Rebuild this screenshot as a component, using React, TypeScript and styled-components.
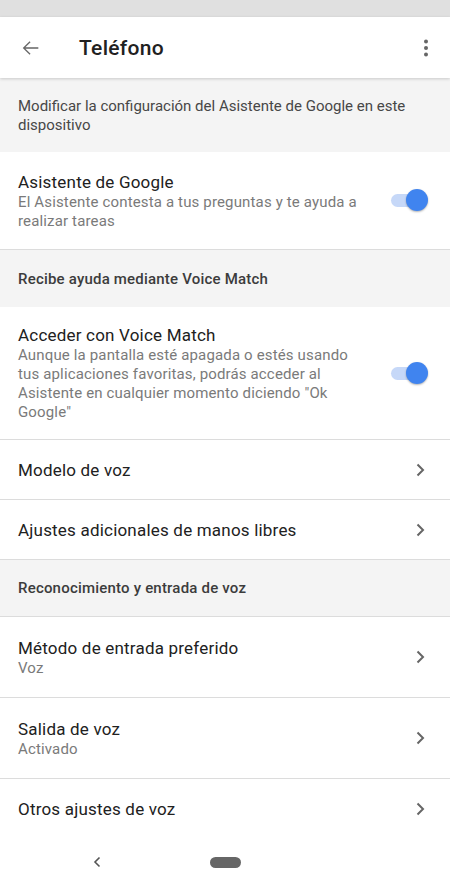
import React from "react";
import styled, { createGlobalStyle } from "styled-components";

const Global = createGlobalStyle`
  html, body { margin: 0; padding: 0; background: #ffffff; }
  body { font-family: Roboto, "Noto Sans", Arial, sans-serif; -webkit-font-smoothing: antialiased; }
  * { box-sizing: border-box; }
`;

const Screen = styled.div`
  width: 450px;
  height: 889px;
  display: flex;
  flex-direction: column;
  background: #ffffff;
  overflow: hidden;
`;

const StatusBar = styled.div`
  height: 17px;
  background: #e0e0e0;
  flex-shrink: 0;
`;

const AppBar = styled.div`
  height: 61px;
  display: flex;
  align-items: center;
  background: #ffffff;
  box-shadow: 0 1px 3px rgba(0, 0, 0, 0.18);
  position: relative;
  z-index: 1;
  flex-shrink: 0;
  padding: 0 11px 0 18px;
`;

const IconButton = styled.div`
  width: 26px;
  height: 26px;
  display: flex;
  align-items: center;
  justify-content: center;
  color: #666666;
`;

const Title = styled.h1`
  margin: 0 0 0 35px;
  flex: 1;
  font-size: 21px;
  font-weight: 500;
  color: #212121;
  letter-spacing: 0.3px;
`;

const Content = styled.div`
  flex: 1;
  display: flex;
  flex-direction: column;
`;

const Description = styled.div`
  background: #f4f4f4;
  padding: 9px 18px 8px;
  height: 74px;
  display: flex;
  align-items: center;
  font-size: 15px;
  line-height: 19px;
  color: #474747;
`;

const SectionHeader = styled.div<{ $borderBottom?: boolean }>`
  background: #f4f4f4;
  height: 57px;
  display: flex;
  align-items: center;
  padding: 0 18px;
  font-size: 15px;
  font-weight: 500;
  letter-spacing: 0.2px;
  color: #3c3c3c;
  border-bottom: ${(p) => (p.$borderBottom ? "1px solid #dcdcdc" : "none")};
`;

const Row = styled.div<{ $height: number; $divider?: boolean }>`
  height: ${(p) => p.$height}px;
  display: flex;
  align-items: center;
  padding: 0 25px 0 18px;
  border-bottom: ${(p) => (p.$divider ? "1px solid #dcdcdc" : "none")};
  flex-shrink: 0;
`;

const TextCol = styled.div`
  flex: 1;
  display: flex;
  flex-direction: column;
  padding-right: 24px;
`;

const RowTitle = styled.div`
  font-size: 17px;
  line-height: 22px;
  letter-spacing: 0.2px;
  color: #212121;
`;

const RowSub = styled.div`
  font-size: 15px;
  line-height: 19px;
  letter-spacing: 0.15px;
  color: #7a7a7a;
`;

const Track = styled.div`
  width: 34px;
  height: 13px;
  border-radius: 7px;
  background: #c6d8f8;
  position: relative;
  flex-shrink: 0;
`;

const Thumb = styled.div`
  position: absolute;
  right: -3px;
  top: -5px;
  width: 22px;
  height: 22px;
  border-radius: 50%;
  background: #4084ef;
  box-shadow: 0 1px 2px rgba(0, 0, 0, 0.3);
`;

const NavBar = styled.div`
  height: 50px;
  flex-shrink: 0;
  display: flex;
  align-items: center;
  position: relative;
  background: #ffffff;
`;

const NavBack = styled.div`
  position: absolute;
  left: 92px;
  top: 17px;
  color: #555555;
  display: flex;
`;

const HomePill = styled.div`
  position: absolute;
  left: 210px;
  top: 18px;
  width: 31px;
  height: 11px;
  border-radius: 6px;
  background: #666666;
`;

const Chevron = () => (
  <svg width="10" height="14" viewBox="0 0 10 14" fill="none">
    <path d="M2.5 1.5 L8 7 L2.5 12.5" stroke="#666" strokeWidth="2" />
  </svg>
);

const Toggle = () => (
  <Track>
    <Thumb />
  </Track>
);

type Item = {
  title: string;
  sub?: string[];
  height: number;
  toggle?: boolean;
  divider?: boolean;
};

const SettingRow = ({ title, sub, height, toggle, divider }: Item) => (
  <Row $height={height} $divider={divider}>
    <TextCol>
      <RowTitle>{title}</RowTitle>
      {sub?.map((s) => (
        <RowSub key={s}>{s}</RowSub>
      ))}
    </TextCol>
    {toggle ? <Toggle /> : <Chevron />}
  </Row>
);

export default function App() {
  return (
    <>
      <Global />
      <Screen>
        <StatusBar />
        <AppBar>
          <IconButton>
            <svg width="22" height="22" viewBox="0 0 24 24" fill="#666">
              <path d="M20 11.2H5.9l5.6-5.6-1-1L3 12l7.5 7.4 1-1-5.6-5.6H20z" />
            </svg>
          </IconButton>
          <Title>Teléfono</Title>
          <IconButton>
            <svg width="6" height="20" viewBox="0 0 6 20" fill="#666">
              <circle cx="3" cy="3.5" r="2" />
              <circle cx="3" cy="10" r="2" />
              <circle cx="3" cy="16.5" r="2" />
            </svg>
          </IconButton>
        </AppBar>
        <Content>
          <Description>
            Modificar la configuración del Asistente de Google en este dispositivo
          </Description>
          <SettingRow
            title="Asistente de Google"
            sub={["El Asistente contesta a tus preguntas y te ayuda a realizar tareas"]}
            height={98}
            toggle
            divider
          />
          <SectionHeader>Recibe ayuda mediante Voice Match</SectionHeader>
          <SettingRow
            title="Acceder con Voice Match"
            sub={[
              'Aunque la pantalla esté apagada o estés usando tus aplicaciones favoritas, podrás acceder al Asistente en cualquier momento diciendo "Ok Google"',
            ]}
            height={133}
            toggle
            divider
          />
          <SettingRow title="Modelo de voz" height={60} divider />
          <SettingRow title="Ajustes adicionales de manos libres" height={60} divider />
          <SectionHeader $borderBottom>Reconocimiento y entrada de voz</SectionHeader>
          <SettingRow title="Método de entrada preferido" sub={["Voz"]} height={81} divider />
          <SettingRow title="Salida de voz" sub={["Activado"]} height={81} divider />
          <SettingRow title="Otros ajustes de voz" height={60} />
        </Content>
        <NavBar>
          <NavBack>
            <svg width="10" height="12" viewBox="0 0 10 12" fill="none">
              <path d="M7.5 1.5 L3 6 L7.5 10.5" stroke="#555" strokeWidth="1.6" />
            </svg>
          </NavBack>
          <HomePill />
        </NavBar>
      </Screen>
    </>
  );
}
